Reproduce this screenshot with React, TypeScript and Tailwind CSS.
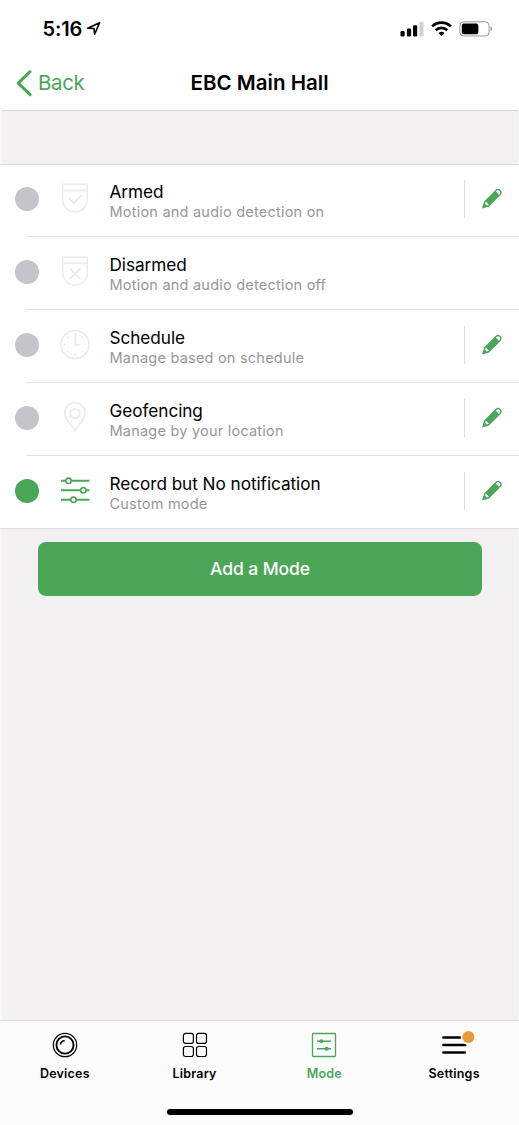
import type { ReactNode } from "react";

const GREEN = "#4ba657";
const FAINT = "#ebebec";

function ShieldIcon({ children }: { children: ReactNode }) {
  return (
    <svg width="30" height="32" viewBox="0 0 30 32" fill="none" stroke={FAINT} strokeWidth="1.5">
      <path d="M2.700 1.300h24.600v15.400c0 7-5.600 12.400-12.300 12.400S2.700 23.700 2.700 16.700zM2.700 7.500h24.600" />
      {children}
    </svg>
  );
}

function ArmedIcon() {
  return (
    <ShieldIcon>
      <path d="M9 15.300l4.700 4.700 8.600-8.200" strokeWidth="1.800" />
    </ShieldIcon>
  );
}

function DisarmedIcon() {
  return (
    <ShieldIcon>
      <path d="M10 12.500l10.500 10.500M20.500 12.500L10 23" strokeWidth="1.800" />
    </ShieldIcon>
  );
}

function ScheduleIcon() {
  return (
    <svg width="30" height="32" viewBox="0 0 30 32" fill="none" stroke={FAINT}>
      <circle cx="15" cy="15.500" r="14" strokeWidth="1.700" />
      <path d="M15.600 4v12h5.200" strokeWidth="1.800" />
      <g fill={FAINT} stroke="none">
        <circle cx="25" cy="15.500" r="1" />
        <circle cx="22.100" cy="22.600" r="1" />
        <circle cx="15" cy="25.500" r="1" />
        <circle cx="7.900" cy="22.600" r="1" />
        <circle cx="5" cy="15.500" r="1" />
        <circle cx="7.900" cy="8.400" r="1" />
        <circle cx="22.100" cy="8.400" r="1" />
      </g>
    </svg>
  );
}

function GeofenceIcon() {
  return (
    <svg width="30" height="32" viewBox="0 0 30 32" fill="none" stroke={FAINT} strokeWidth="1.700">
      <path d="M15 28.900C12 23.500 4.700 17.300 4.700 11a10.300 10.300 0 0 1 20.600 0C25.300 17.300 18 23.500 15 28.900z" />
      <circle cx="15" cy="11.500" r="4.700" />
    </svg>
  );
}

function SlidersIcon() {
  return (
    <svg width="30" height="32" viewBox="0 0 30 32" fill="none" stroke={GREEN} strokeWidth="1.900">
      <path d="M1 5.800h28.400M1 15.300h28.400M1 24.700h28.400" />
      <g fill="#fff" strokeWidth="1.600">
        <circle cx="8.500" cy="5.800" r="2.700" />
        <circle cx="23.300" cy="15.300" r="2.700" />
        <circle cx="13.500" cy="24.700" r="2.700" />
      </g>
    </svg>
  );
}

function PencilIcon() {
  return (
    <svg width="22" height="22" viewBox="0 0 22 22" fill={GREEN}>
      <g transform="translate(1 20.500) rotate(-45)">
        <path d="M0 0L6.500 -3.500H22.600a3.500 3.500 0 0 1 0 7H6.500z" />
        <path d="M5.600-1.200L7.600-2.200V2.200L5.600 1.200zM21.700-2.200H22.600a2.200 2.200 0 0 1 0 4.400H21.700z" fill="#fff" />
      </g>
    </svg>
  );
}

const modes = [
  { title: "Armed", detail: "Motion and audio detection on", icon: <ArmedIcon />, edit: true },
  { title: "Disarmed", detail: "Motion and audio detection off", icon: <DisarmedIcon />, edit: false },
  { title: "Schedule", detail: "Manage based on schedule", icon: <ScheduleIcon />, edit: true },
  { title: "Geofencing", detail: "Manage by your location", icon: <GeofenceIcon />, edit: true },
  { title: "Record but No notification", detail: "Custom mode", icon: <SlidersIcon />, edit: true, active: true },
];

function StatusBar() {
  return (
    <div className="flex h-[57px] items-start justify-between pl-[42.500px] pr-[26px] pt-[15px]">
      <div className="flex items-center">
        <span className="text-[20px] font-semibold leading-7 tracking-[-0.100px]">5:16</span>
        <svg className="ml-1" width="16" height="16" viewBox="0 0 16 16" fill="none" stroke="#000" strokeWidth="1.600" strokeLinejoin="round">
          <path d="M1.700 7.200L13.600 1.700 8.600 13.200 8 7.500z" />
        </svg>
      </div>
      <div className="flex h-7 items-center gap-[7px]">
        <svg width="24" height="16" viewBox="0 0 24 16">
          <rect x="0.500" y="10" width="4.200" height="5.500" rx="1.200" />
          <rect x="6.900" y="7.500" width="4.200" height="8" rx="1.200" />
          <rect x="13" y="4.200" width="4.200" height="11.300" rx="1.200" />
          <rect x="19.300" y="0.700" width="4.200" height="14.800" rx="1.200" fill="#cfcfcf" />
        </svg>
        <svg width="21" height="16" viewBox="0 0 21 16" fill="none" stroke="#000" strokeWidth="2.700">
          <path d="M1.200 5.400a13.300 13.300 0 0 1 18.600 0" />
          <path d="M4.700 9.300a8.300 8.300 0 0 1 11.600 0" />
          <path d="M10.500 15.200L7.500 12.100a4.300 4.300 0 0 1 6 0z" fill="#000" stroke="none" />
        </svg>
        <svg width="34" height="16" viewBox="0 0 34 16">
          <rect x="0.900" y="0.800" width="29.200" height="14.200" rx="4" fill="none" stroke="#999" />
          <rect x="2.800" y="2.600" width="16.500" height="10.600" rx="2" />
          <path d="M31.500 5.300q1.600.6 1.600 2.500t-1.600 2.500z" fill="#999" />
        </svg>
      </div>
    </div>
  );
}

function NavBar() {
  return (
    <div className="grid h-[53px] grid-cols-[1fr_auto_1fr] items-center pb-px pl-[16px] pr-[16px]">
      <div className="flex items-center text-[#4ba657]">
        <svg width="17" height="28" viewBox="0 0 17 28" fill="none" stroke={GREEN} strokeWidth="3" strokeLinecap="round" strokeLinejoin="round">
          <path d="M14.100 2.700L2.200 14.200 14.100 25.700" />
        </svg>
        <span className="ml-[5px] text-[20.500px] leading-7 tracking-[-0.350px]">Back</span>
      </div>
      <h1 className="whitespace-nowrap text-[20.500px] font-semibold leading-7 tracking-[0.030px]">EBC Main Hall</h1>
      <span />
    </div>
  );
}

const tabs = [
  {
    label: "Devices",
    icon: (
      <svg width="26" height="26" viewBox="0 0 26 26" fill="none" stroke="#000">
        <circle cx="13" cy="13" r="11.700" strokeWidth="1.200" />
        <circle cx="13" cy="13" r="8.600" strokeWidth="1.900" />
        <path d="M8.300 12.700a4.600 4.600 0 0 1 4.400-3.900" strokeWidth="1.400" />
      </svg>
    ),
  },
  {
    label: "Library",
    icon: (
      <svg width="26" height="26" viewBox="0 0 26 26" fill="none" stroke="#000" strokeWidth="1.200">
        <rect x="1.400" y="1.400" width="10" height="10" rx="2.200" />
        <rect x="14.500" y="1.400" width="10" height="10" rx="2.200" />
        <rect x="1.400" y="14.500" width="10" height="10" rx="2.200" />
        <rect x="14.500" y="14.500" width="10" height="10" rx="2.200" />
      </svg>
    ),
  },
  {
    label: "Mode",
    active: true,
    icon: (
      <svg width="26" height="26" viewBox="0 0 26 26" fill="none" stroke={GREEN} strokeWidth="1.300">
        <rect x="1.500" y="1.500" width="23" height="23" rx="0.800" />
        <path d="M6 9.200h14M6 16.800h14" strokeWidth="1.500" />
        <g fill={GREEN} stroke="none">
          <circle cx="10.300" cy="9.200" r="2" />
          <circle cx="15.700" cy="16.800" r="2" />
        </g>
      </svg>
    ),
  },
  {
    label: "Settings",
    icon: (
      <svg className="overflow-visible" width="26" height="26" viewBox="0 0 26 26">
        <path d="M2.300 5.500h18M2.300 13h22M2.300 20.500h21.500" fill="none" stroke="#000" strokeWidth="2.400" strokeLinecap="round" />
        <circle cx="27.400" cy="5.100" r="7.800" fill="#fcfcfc" />
        <circle cx="27.400" cy="5.100" r="6" fill="#ee9a32" />
      </svg>
    ),
  },
];

export default function App() {
  return (
    <div className="flex h-[1125px] w-[519px] flex-col overflow-hidden bg-white font-[Inter,sans-serif] text-black">
      <header>
        <StatusBar />
        <NavBar />
      </header>

      <main className="flex grow flex-col border-l-2 border-r border-l-[#f8f8f8] border-r-[#f8f8f8] bg-[#f3f1f2]">
        <div className="h-[54px] border-t border-[#d9d8d9]" />
        <ul className="-ml-[2px] -mr-[1px] border-b border-t border-[#dedddf] bg-white">
          {modes.map((mode, i) => (
            <li key={mode.title} className={i === 0 ? "h-[71px]" : "h-[73px]"}>
              {i > 0 && <div className="ml-[26px] h-px bg-[#e2e2e3]" />}
              <div className={`flex items-start pl-[15px] ${i > 0 ? "pt-[0.5px]" : ""}`}>
                <span
                  className={`mt-[22px] size-6 shrink-0 rounded-full ${mode.active ? "bg-[#4ba657]" : "bg-[#c5c4ca]"}`}
                />
                <span className="ml-[21px] mt-[18px]">{mode.icon}</span>
                <div className={`ml-[19.500px] grow ${i > 0 ? "mt-[16.500px]" : "mt-[16px]"}`}>
                  <h2 className="text-[17.200px] leading-[22px] tracking-[-0.050px]">{mode.title}</h2>
                  <p className="text-[14.500px] leading-[18px] tracking-[0.220px] text-[#97979a]">{mode.detail}</p>
                </div>
                {mode.edit && (
                  <div className="mt-[15px] flex h-[38px] w-[55px] items-center border-l border-[#dddde0] pl-[16px]">
                    <PencilIcon />
                  </div>
                )}
              </div>
            </li>
          ))}
        </ul>
        <button className="ml-9 mr-9 mt-[13px] h-[54px] rounded-lg bg-[#4ba657] text-[17.500px] font-medium tracking-[-0.100px] text-white">
          Add a Mode
        </button>
      </main>

      <footer className="h-[105px] border-t border-[#d5d5d6] bg-[#fcfcfc]">
        <nav className="grid grid-cols-4">
          {tabs.map((tab) => (
            <div key={tab.label} className={`flex flex-col items-center pt-[10.500px] ${tab.active ? "text-[#4ba657]" : ""}`}>
              {tab.icon}
              <span className="mt-[6.500px] text-[12.500px] font-semibold leading-5 tracking-[0.200px]">{tab.label}</span>
            </div>
          ))}
        </nav>
        <div className="mx-auto mt-[25px] h-[6px] w-[186px] rounded-full bg-black" />
      </footer>
    </div>
  );
}
